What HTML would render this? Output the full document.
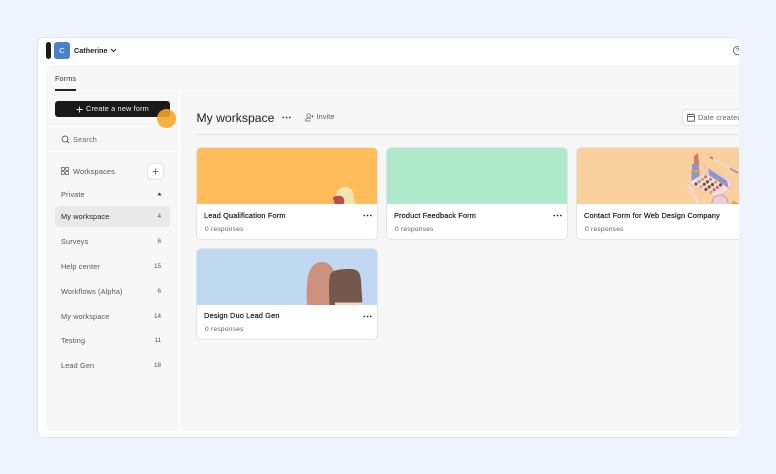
<!DOCTYPE html>
<html><head><meta charset="utf-8">
<style>
html,body{margin:0;padding:0}
body{width:776px;height:474px;overflow:hidden;background:#eef3fe;font-family:"Liberation Sans",sans-serif;position:relative;color:#1f1f1f}
div{position:absolute;box-sizing:border-box}
.t{white-space:nowrap;line-height:12px}
.nav{left:61px;font-size:7.3px;color:#555;letter-spacing:.15px}
.num{left:140px;width:21px;text-align:right;font-size:6.3px;color:#555}
.card{width:182px;height:92px;background:#fff;border:1px solid #e4e4e4;border-radius:5px;overflow:hidden}
.row1{height:93px}
.img{left:0;top:0;width:100%;height:56px}
.title{font-size:7.3px;color:#191919;left:7px;top:61.500px;-webkit-text-stroke:.2px #191919;letter-spacing:.18px}
.sub{font-size:6.6px;color:#5e5e5e;left:8px;top:75.500px;letter-spacing:.25px}
.dots{position:absolute;left:166px;top:66px}
.art{position:absolute;left:0;top:0}
</style></head><body>
<div id="win" style="left:37px;top:37px;width:702px;height:401px;background:#fff;border:1px solid #dfe5f5;border-right:0;border-radius:7px;overflow:hidden"></div>
<div style="left:46px;top:65px;width:693px;height:366px;background:#f7f7f7;border-radius:6px 0 6px 6px"></div>
<div style="left:46px;top:91px;width:693px;height:1px;background:#fcfcfc"></div>
<div style="left:178px;top:91px;width:3px;height:340px;background:#fbfbfb"></div>
<div style="left:46px;top:126px;width:132px;height:1px;background:#fdfdfd"></div>
<div style="left:46px;top:151px;width:132px;height:1px;background:#fdfdfd"></div>

<div style="left:46px;top:42px;width:5px;height:17px;background:#191919;border-radius:3px"></div>
<div style="left:54px;top:42px;width:16px;height:17px;background:#4a80c9;border-radius:3px;color:#fff;font-size:7.500px;line-height:17px;text-align:center">C</div>
<div class="t" style="left:74px;top:44.500px;font-size:7.200px;font-weight:bold;color:#1c1c1c;letter-spacing:.05px">Catherine</div>
<svg style="position:absolute;left:110px;top:48px" width="7" height="5" viewBox="0 0 7 5"><path d="M1 1l2.500 2.500L6 1" fill="none" stroke="#222" stroke-width="1"/></svg>
<svg style="position:absolute;left:733px;top:46px" width="6" height="9" viewBox="0 0 6 9"><path d="M6 .6A3.900 3.900 0 0 0 .6 4.500 3.900 3.900 0 0 0 6 8.400" fill="none" stroke="#555" stroke-width=".8"/><path d="M3.400 3.200a1.200 1.200 0 1 1 1.800 1L4.600 5" fill="none" stroke="#555" stroke-width=".7"/></svg>

<div class="t" style="left:55px;top:72.500px;font-size:7.300px;color:#333;letter-spacing:.1px">Forms</div>
<div style="left:55px;top:89px;width:21px;height:1.500px;background:#222"></div>

<div style="left:55px;top:101px;width:115px;height:16px;background:#191919;border-radius:3px"></div>
<svg style="position:absolute;left:76px;top:105.500px" width="7" height="7" viewBox="0 0 7 7"><path d="M3.500 .5v6M.5 3.500h6" stroke="#eee" stroke-width=".9"/></svg>
<div class="t" style="left:86px;top:103px;font-size:7.300px;color:#f3f3f3;letter-spacing:.17px">Create a new form</div>
<div style="left:157px;top:109px;width:19px;height:19px;background:#f5a623;opacity:.88;border-radius:50%"></div>

<svg style="position:absolute;left:61px;top:135px" width="9" height="9" viewBox="0 0 9 9"><circle cx="4" cy="4" r="3" fill="none" stroke="#444" stroke-width=".8"/><path d="M6.200 6.200L8 8" stroke="#444" stroke-width=".8"/></svg>
<div class="t" style="left:73px;top:133.500px;font-size:7.200px;color:#666;letter-spacing:.2px">Search</div>

<svg style="position:absolute;left:61px;top:167px" width="8" height="8" viewBox="0 0 8 8"><g fill="none" stroke="#555" stroke-width=".7"><rect x=".4" y=".4" width="3" height="3" rx=".5"/><rect x="4.600" y=".4" width="3" height="3" rx=".5"/><rect x=".4" y="4.600" width="3" height="3" rx=".5"/><rect x="4.600" y="4.600" width="3" height="3" rx=".5"/></g></svg>
<div class="t nav" style="left:73px;top:165.500px;font-size:7.400px">Workspaces</div>
<div style="left:147px;top:163px;width:17px;height:17px;background:#fff;border:1px solid #e5e5e5;border-radius:4px"></div>
<svg style="position:absolute;left:152px;top:168px" width="7" height="7" viewBox="0 0 7 7"><path d="M3.500 .5v6M.5 3.500h6" stroke="#555" stroke-width=".8"/></svg>

<div class="t nav" style="top:188.500px">Private</div>
<svg style="position:absolute;left:157px;top:192px" width="5" height="4" viewBox="0 0 5 4"><path d="M2.500 .5L4.600 3.400H.4z" fill="#333"/></svg>

<div style="left:55px;top:206px;width:115px;height:21px;background:#e9e9e9;border-radius:4px"></div>
<div class="t nav" style="top:211px;color:#222">My workspace</div><div class="t num" style="top:211px">4</div>
<div class="t nav" style="top:236px">Surveys</div><div class="t num" style="top:236px">6</div>
<div class="t nav" style="top:261px">Help center</div><div class="t num" style="top:261px">15</div>
<div class="t nav" style="top:286px">Workflows (Alpha)</div><div class="t num" style="top:286px">6</div>
<div class="t nav" style="top:311px">My workspace</div><div class="t num" style="top:311px">14</div>
<div class="t nav" style="top:335px">Testing</div><div class="t num" style="top:335px">11</div>
<div class="t nav" style="top:360px">Lead Gen</div><div class="t num" style="top:360px">18</div>

<div class="t" style="left:196.500px;top:110.500px;font-size:12.200px;color:#1c1c1c;line-height:14px">My workspace</div>
<svg style="position:absolute;left:282px;top:115.500px" width="9" height="3" viewBox="0 0 9 3"><g fill="#333"><circle cx="1.200" cy="1.500" r=".9"/><circle cx="4.500" cy="1.500" r=".9"/><circle cx="7.800" cy="1.500" r=".9"/></g></svg>
<svg style="position:absolute;left:305px;top:113px" width="9" height="9" viewBox="0 0 9 9"><g fill="none" stroke="#555" stroke-width=".7"><circle cx="3.600" cy="2.500" r="1.800"/><path d="M.5 8v-.8c0-1.300 1.300-2 3.100-2 1 0 1.800.2 2.300.6M.5 8h5M6.300 3.300h2.400M7.500 2.100v2.400"/></g></svg>
<div class="t" style="left:316.500px;top:111px;font-size:7.300px;color:#5a5a5a;letter-spacing:.1px">Invite</div>

<div style="left:682px;top:109px;width:70px;height:17px;background:#fff;border:1px solid #e3e3e3;border-radius:4px"></div>
<svg style="position:absolute;left:687px;top:113px" width="8" height="9" viewBox="0 0 8 9"><g fill="none" stroke="#444" stroke-width=".8"><rect x=".6" y="1.400" width="6.800" height="6.800" rx=".6"/><path d="M.6 3.500h6.800M2.300.4v1.500M5.700.4v1.500"/></g></svg>
<div class="t" style="left:698px;top:111.500px;font-size:7.300px;color:#666;letter-spacing:.15px">Date created</div>

<div style="left:196px;top:134px;width:543px;height:1px;background:#e4e4e4"></div>

<div class="card row1" style="left:196px;top:147px">
  <div class="img" style="background:#febc5b"></div>
  <svg class="art" width="180" height="56" viewBox="197 148 180 56">
    <path d="M336 204V196C336 191 340 187 345 187c5 0 8 3 8.500 8 .3 4 1 7 2 9z" fill="#f6e4ae"/>
    <path d="M333 197.500c2-1.800 6-2.300 9-1 2.500 1.200 2.700 5 1.500 7.500H335c-1-1-.5-2.500-1-3.500-.7-.8-1.500-1.800-1-3z" fill="#bf4b4b"/>
  </svg>
  <div class="t title">Lead Qualification Form</div>
  <div class="t sub">0 responses</div>
  <svg class="dots" width="9" height="3" viewBox="0 0 9 3"><g fill="#333"><circle cx="1.200" cy="1.500" r=".9"/><circle cx="4.500" cy="1.500" r=".9"/><circle cx="7.800" cy="1.500" r=".9"/></g></svg>
</div>

<div class="card row1" style="left:386px;top:147px">
  <div class="img" style="background:#afe9cb"></div>
  <div class="t title">Product Feedback Form</div>
  <div class="t sub">0 responses</div>
  <svg class="dots" width="9" height="3" viewBox="0 0 9 3"><g fill="#333"><circle cx="1.200" cy="1.500" r=".9"/><circle cx="4.500" cy="1.500" r=".9"/><circle cx="7.800" cy="1.500" r=".9"/></g></svg>
</div>

<div class="card row1" style="left:576px;top:147px;width:200px">
  <div class="img" style="background:#fbd09f"></div>
  <svg class="art" width="198" height="56" viewBox="577 148 198 56">
    <path d="M694 156l4-3 1 12h-5z" fill="#d9766a"/>
    <rect x="692" y="164" width="7" height="6" fill="#8e95cc"/>
    <rect x="691" y="170" width="9" height="2" fill="#dfa33f"/>
    <rect x="691.500" y="172" width="8" height="12" fill="#8e95cc"/>
    <path d="M710 157l28 16" stroke="#efdcc8" stroke-width="1.300"/>
    <path d="M710 157l3 1.700" stroke="#d4636a" stroke-width="1.600"/>
    <path d="M730 168.500l8 4.500" stroke="#8e95cc" stroke-width="1.800"/>
    <path d="M704 166l27 14v9l-24-16z" fill="#f7d8d6" stroke="#e7a6ac" stroke-width=".5"/>
    <path d="M708 168.500l19 12 1.500 7-19-12z" fill="#8e95cc"/>
    <path d="M688 183l17-10 25 16-13 9z" fill="#f7dcd8" stroke="#e7a6ac" stroke-width=".5"/>
    <g fill="#7d4a3a"><circle cx="696" cy="184" r="1.600"/><circle cx="706" cy="189.400" r="1.600"/><circle cx="709.200" cy="187" r="1.600"/><circle cx="704.200" cy="184.300" r="1.600"/><circle cx="712.400" cy="184.600" r="1.600"/><circle cx="720.600" cy="184.900" r="1.600"/><circle cx="707.400" cy="181.900" r="1.600"/></g>
    <g fill="#e0a33f"><circle cx="701" cy="186.700" r="1.600"/><circle cx="711" cy="192.100" r="1.600"/><circle cx="702.400" cy="179.200" r="1.600"/><circle cx="715.600" cy="182.200" r="1.600"/></g>
    <g fill="#d4636a"><circle cx="714.200" cy="189.700" r="1.600"/><circle cx="705.600" cy="176.800" r="1.600"/><circle cx="717.400" cy="187.300" r="1.600"/></g>
    <g fill="#8e95cc"><circle cx="699.200" cy="181.600" r="1.600"/><circle cx="710.600" cy="179.500" r="1.600"/></g>
    <path d="M687 185l2-1 11 20h-3z" fill="#f7d8d6"/>
    <circle cx="720" cy="203" r="8" fill="#f3c9d2" stroke="#8e95cc" stroke-width=".7"/>
    <path d="M731 204l2-3.500 6 3.500z" fill="#dfa33f"/>
  </svg>
  <div class="t title">Contact Form for Web Design Company</div>
  <div class="t sub">0 responses</div>
</div>

<div class="card" style="left:196px;top:248px">
  <div class="img" style="background:#c1d8f3"></div>
  <svg class="art" width="180" height="56" viewBox="197 249 180 56">
    <path d="M307 305C306 285 306 262 322 262C336 262 337 280 337 305z" fill="#cc927e"/>
    <path d="M329.500 305C329 292 328.500 282 330 275C331.500 270 340 269 350 269C358 269 360 272 361 280L362.500 305z" fill="#75584b"/>
    <rect x="335" y="302.500" width="27.500" height="2.500" fill="#f2d8b5"/>
  </svg>
  <div class="t title" style="top:60.500px">Design Duo Lead Gen</div>
  <div class="t sub" style="top:74.500px">0 responses</div>
  <svg class="dots" width="9" height="3" viewBox="0 0 9 3"><g fill="#333"><circle cx="1.200" cy="1.500" r=".9"/><circle cx="4.500" cy="1.500" r=".9"/><circle cx="7.800" cy="1.500" r=".9"/></g></svg>
</div>

<div style="left:739px;top:0;width:37px;height:474px;background:#eef3fe"></div>
</body></html>
